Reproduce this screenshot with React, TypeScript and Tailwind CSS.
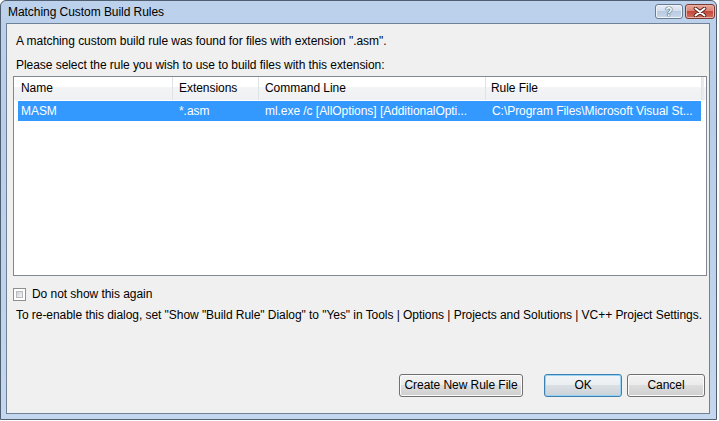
import React from "react";

const font = { fontFamily: '"Liberation Sans", Arial, sans-serif' };

function VistaButton({
  children,
  className = "",
  focused = false,
}: {
  children: React.ReactNode;
  className?: string;
  focused?: boolean;
}) {
  return (
    <div
      className={
        "h-[23px] rounded-[3px] border flex items-center justify-center text-[12px] text-black " +
        (focused
          ? "border-[#3c7fb1] shadow-[inset_0_0_0_1px_#97d4f4] bg-[linear-gradient(to_bottom,#f2f5f7_0%,#e9eef1_50%,#d9dfe3_50%,#ccd3d8_100%)] "
          : "border-[#707070] shadow-[inset_0_0_0_1px_#fbfbfb] bg-[linear-gradient(to_bottom,#f2f2f2_0%,#ebebeb_50%,#dddddd_50%,#cfcfcf_100%)] ") +
        className
      }
    >
      {children}
    </div>
  );
}

export default function App() {
  return (
    <div className="w-[719px] h-[421px] bg-white tracking-[-0.05px]" style={font}>
      <div className="w-[717px] h-[420px] rounded-t-[6px] border border-[#4f5e70] bg-[linear-gradient(to_bottom,#bcd1ec_0%,#b9cee9_30%,#c4d7ee_100%)] flex flex-col">
        {/* Title bar */}
        <div className="h-[22px] flex items-start pl-[7px] pr-[1px]">
          <div className="pt-[4px] text-[12px] leading-[15px] text-black flex-1">
            Matching Custom Build Rules
          </div>
          <div className="flex mt-[3px] gap-[2px]">
            <div className="w-[28px] h-[15px] rounded-[3px] border border-[#6b7b90] shadow-[inset_0_0_0_1px_#eef3fa] bg-[linear-gradient(to_bottom,#e6edf6_0%,#d3deec_50%,#b9cbe2_50%,#c8d8ec_100%)] flex items-center justify-center">
              <span className="text-[12px] font-bold leading-none text-white [text-shadow:0_0_1px_#3b4a5c,0_0_1px_#3b4a5c,0_0_1px_#3b4a5c]">
                ?
              </span>
            </div>
            <div className="w-[30px] h-[15px] rounded-[3px] border border-[#7a3a32] shadow-[inset_0_0_0_1px_#e9b2a6] bg-[linear-gradient(to_bottom,#e8a596_0%,#d98373_50%,#c4483a_50%,#d2705f_100%)] flex items-center justify-center">
              <svg width="14" height="10" viewBox="0 0 14 10">
                <path d="M2.5 1.5 L11.5 8.5 M11.5 1.5 L2.5 8.5" stroke="#4a1e18" strokeWidth="3.6" strokeLinecap="round" />
                <path d="M2.5 1.5 L11.5 8.5 M11.5 1.5 L2.5 8.5" stroke="#ffffff" strokeWidth="2" strokeLinecap="round" />
              </svg>
            </div>
          </div>
        </div>

        {/* Body */}
        <div className="ml-[5px] mr-[6px] mb-[5px] flex-1 border border-[#6f8196] bg-[#f0f0f0] flex flex-col text-[12px] leading-[15px] text-black">
          <div className="pt-[10px] pl-[9px]">
            A matching custom build rule was found for files with extension ".asm".
          </div>
          <div className="mt-[9px] pl-[9px]">
            Please select the rule you wish to use to build files with this extension:
          </div>

          {/* List view */}
          <div className="mt-[3px] ml-[6px] w-[694px] h-[200px] border border-[#828790] bg-white flex flex-col">
            <div className="h-[23px] flex bg-[linear-gradient(to_bottom,#ffffff_0%,#ffffff_45%,#f3f4f6_45%,#eff0f2_100%)]">
              <div className="w-[159px] border-r border-[#dfe3e8] pl-[7px] flex items-center">Name</div>
              <div className="w-[86px] border-r border-[#dfe3e8] pl-[6px] flex items-center">Extensions</div>
              <div className="w-[227px] border-r border-[#dfe3e8] pl-[6px] flex items-center">Command Line</div>
              <div className="w-[216px] border-r border-[#dfe3e8] pl-[5px] flex items-center">Rule File</div>
              <div className="w-[2px] bg-[#e8eaed]" />
            </div>
            <div className="mt-[1px] ml-[4px] w-[683px] h-[20px] bg-[#3399ff] text-white flex items-center whitespace-nowrap">
              <div className="w-[155px] pl-[3px]">MASM</div>
              <div className="w-[86px] pl-[6px]">*.asm</div>
              <div className="w-[227px] pl-[6px]">ml.exe /c [AllOptions] [AdditionalOpti...</div>
              <div className="w-[215px] pl-[6px] overflow-hidden">C:\Program Files\Microsoft Visual St...</div>
            </div>
          </div>

          {/* Checkbox */}
          <div className="mt-[12px] ml-[6px] flex items-center h-[13px]">
            <div className="w-[13px] h-[13px] border border-[#8e8f8f] bg-white p-[2px]">
              <div className="w-full h-full border border-[#b8bcc0] bg-[linear-gradient(135deg,#cfd1d3_0%,#f4f4f4_100%)]" />
            </div>
            <span className="ml-[6px]">Do not show this again</span>
          </div>

          <div className="mt-[7px] pl-[9px] whitespace-nowrap">
            To re-enable this dialog, set "Show "Build Rule" Dialog" to "Yes" in Tools | Options | Projects and Solutions | VC++ Project Settings.
          </div>

          {/* Buttons */}
          <div className="mt-auto mb-[16px] flex justify-end pr-[4px]">
            <VistaButton className="w-[124px]">Create New Rule File</VistaButton>
            <VistaButton className="w-[78px] ml-[21px]" focused>
              OK
            </VistaButton>
            <VistaButton className="w-[78px] ml-[5px]">Cancel</VistaButton>
          </div>
        </div>
      </div>
    </div>
  );
}
